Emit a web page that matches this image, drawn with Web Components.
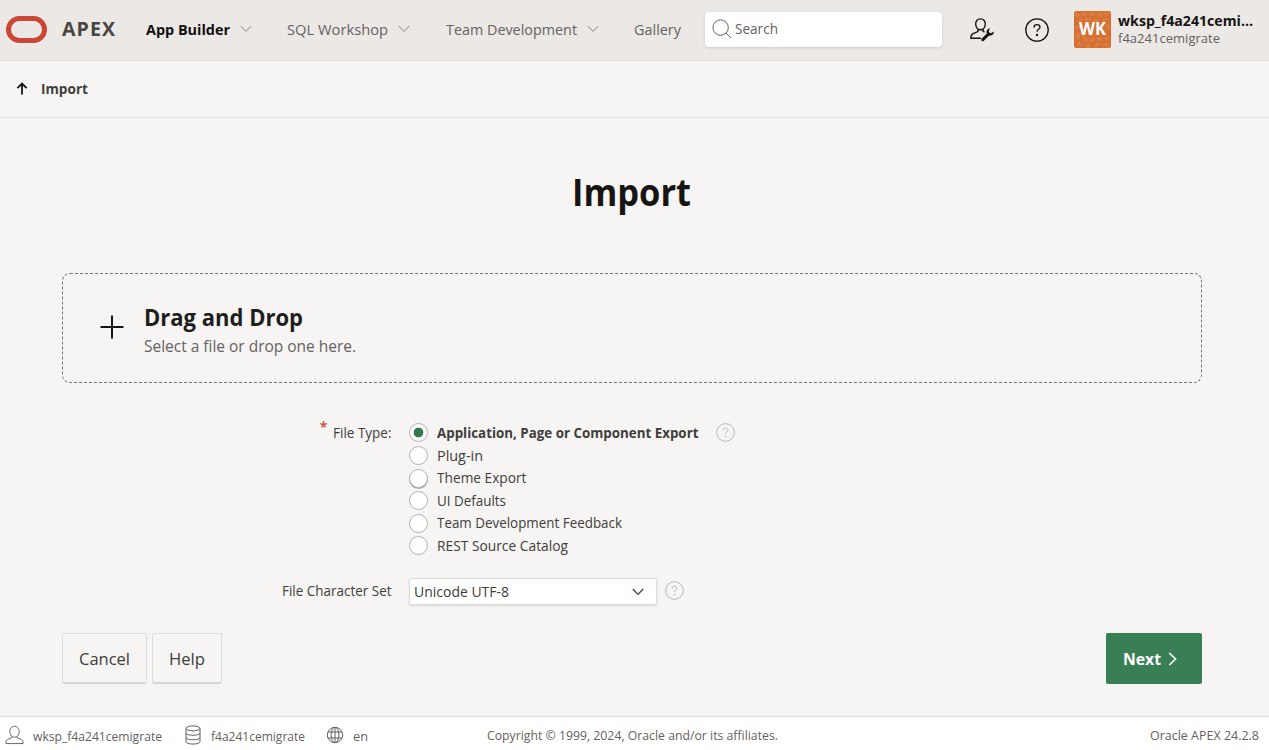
<!DOCTYPE html>
<html lang="en">
<head>
<meta charset="utf-8">
<title>Import</title>
<style>
html,body{margin:0;height:100%;background:#f6f5f3}
body{font-family:"Open Sans","Noto Sans",sans-serif;overflow:hidden}
</style>
</head>
<body>
<apex-page></apex-page>
<script>
function define(name, css, html, ready) {
  customElements.define(name, class extends HTMLElement {
    constructor() {
      super();
      const t = document.createElement('template');
      t.innerHTML = '<style>*{box-sizing:border-box}' + css + '</style>' + html;
      this.attachShadow({mode: 'open'}).appendChild(t.content.cloneNode(true));
    }
    connectedCallback() { if (ready) ready.call(this); }
  });
}

/* Single line label condensed to the width given in its w attribute. */
define('fit-text', ':host{display:block;flex:none;white-space:nowrap}span{display:inline-block;transform-origin:0 50%}',
  '<span><slot></slot></span>', function () {
    const span = this.shadowRoot.querySelector('span');
    const w = +this.getAttribute('w');
    this.style.width = w + 'px';
    const fit = () => {
      span.style.transform = 'none';
      const n = span.getBoundingClientRect().width;
      if (n) span.style.transform = 'scaleX(' + (w / n) + ')';
    };
    requestAnimationFrame(fit);
    document.fonts.ready.then(fit);
    window.addEventListener('load', fit);
  });

const icons = {
  chevron: ['0 0 12 8', '<path d="M.8 1 6 6.4 11.2 1"/>'],
  right: ['0 0 9 14', '<path d="M1.2 1 7.6 7 1.2 13"/>'],
  up: ['0 0 12 13', '<path d="M6 12.5V2M1.4 6.2 6 1.6l4.6 4.6"/>'],
  plus: ['0 0 24 24', '<path d="M12 .5v23M.5 12h23"/>'],
  search: ['0 0 20 20', '<circle cx="8.6" cy="8.6" r="7.7"/><path d="m14 14 5 5"/>'],
  help: ['0 0 24 24', '<circle cx="12" cy="12" r="11.2"/><path d="M9 9.4C9 7.6 10.2 6.6 12 6.6s3 1 3 2.6c0 2-3 2.2-3 4.6"/><circle cx="12" cy="16.9" r=".55" fill="currentColor"/>'],
  user: ['0 0 20 20', '<ellipse cx="10" cy="6.5" rx="5" ry="5.8"/><path d="M7.3 11.6v1.2l-4.8 2Q1 15.500 1 17v2h18v-2q0-1.500-1.500-2.200l-4.800-2v-1.200"/>'],
  admin: ['0 0 24 24', '<path d="M10.500.9C7.300.900 5.500 3.300 5.700 6.300c.2 3 2.300 5.500 4.800 5.500s4.600-2.500 4.800-5.500C15.500 3.300 13.700.900 10.500.9ZM7.900 11v2.600L3.100 15.700Q.8 16.800.8 20.300H11M13.100 11v2.300l1.400.700"/><path d="M12.800 21.600 18 16.600" stroke-width="3" stroke-linecap="round"/><path d="M20.300 10.200c-2.400.2-4.200 2.300-3.700 4.500.4 2 2.400 3.300 4.300 2.900 1.900-.4 3.100-2.100 2.900-4.100l-2.700 1.700-1.900-.7-.4-2Z" fill="currentColor" stroke="none"/>'],
  db: ['0 0 16 20', '<ellipse cx="8" cy="3.400" rx="7" ry="2.500"/><path d="M1 3.400v13.200c0 3.300 14 3.300 14 0V3.400M1 8c0 3 14 3 14 0M1 12.500c0 3 14 3 14 0"/>'],
  globe: ['0 0 18 18', '<circle cx="9" cy="9" r="7.700"/><ellipse cx="9" cy="9" rx="3.900" ry="7.700"/><path d="M9 1.300v15.400M2 6h14M2 12h14"/>']
};
define('ui-icon', ':host{display:block;flex:none}svg{display:block;overflow:visible;fill:none;stroke:currentColor}', '<svg></svg>', function () {
  const [box, body] = icons[this.getAttribute('name')];
  const s = this.shadowRoot.querySelector('svg'), b = box.split(' ');
  s.setAttribute('viewBox', box);
  s.setAttribute('width', this.getAttribute('w') || b[2]);
  s.setAttribute('height', this.getAttribute('h') || b[3]);
  s.setAttribute('stroke-width', this.getAttribute('sw') || 1);
  s.innerHTML = body;
});

define('apex-header', `
:host{display:flex;align-items:center;height:61px;flex:none;background:#ece8e5;border-bottom:1px solid #e0dedc;padding:0 0 2px 6px;font-size:15px;line-height:22px;color:#65625f}
.logo{width:41px;height:27px;border:5px solid #c94734;border-radius:14px;flex:none}
.brand{margin-left:15px;font-size:19px;font-weight:700;letter-spacing:1px;color:#484543;line-height:24px}
.on{font-weight:700;color:#100f0e}
ui-icon{color:#85817e}
.search{width:237px;height:35px;margin-left:24px;margin-top:1px;background:#fff;border-radius:4px;box-shadow:0 1px 3px #0002;display:flex;align-items:center;padding:0 0 1px 7px;gap:3px;font-size:14px;flex:none}
.search ui-icon{color:#65625f}
.dark{color:#161513;margin-top:1px}
.avatar{width:37px;height:37px;border-radius:2px;margin-left:25px;flex:none;overflow:hidden;display:grid;place-items:center;background:#d57033;color:#fff;font-weight:700;font-size:17px}
.avatar>*{grid-area:1/1}
.who{margin-left:7px;margin-top:1px;color:#161513;font-weight:700;font-size:14px;line-height:17px}
.who .sub{font-weight:400;color:#65625f;font-size:13px;line-height:18px}
`, `
<div class="logo"></div><fit-text class="brand" w="54">APEX</fit-text>
<fit-text class="on" w="84" style="margin-left:30px">App Builder</fit-text><ui-icon name="chevron" style="margin-left:10px"></ui-icon>
<fit-text w="101" style="margin-left:35px">SQL Workshop</fit-text><ui-icon name="chevron" style="margin-left:10px"></ui-icon>
<fit-text w="131" style="margin-left:36px">Team Development</fit-text><ui-icon name="chevron" style="margin-left:10px"></ui-icon>
<fit-text w="47" style="margin-left:35px">Gallery</fit-text>
<div class="search"><ui-icon name="search"></ui-icon><fit-text w="43">Search</fit-text></div>
<ui-icon class="dark" name="admin" sw="1.4" style="margin-left:28px"></ui-icon>
<ui-icon class="dark" name="help" sw="1.3" style="margin-left:31px"></ui-icon>
<div class="avatar"><svg width="37" height="37"><g fill="#dd7c3f"><ellipse cx="3" cy="4" rx="3" ry="2" transform="rotate(30 3 4)"/><ellipse cx="10" cy="3" rx="3" ry="2"/><ellipse cx="18" cy="3" rx="3.300" ry="1.800" transform="rotate(-20 18 3)"/><ellipse cx="26" cy="4" rx="3" ry="2"/><ellipse cx="33" cy="3" rx="3" ry="1.800"/><ellipse cx="6" cy="9" rx="3" ry="1.900" transform="rotate(-35 6 9)"/><ellipse cx="14" cy="8" rx="3" ry="1.800"/><ellipse cx="22" cy="9" rx="3" ry="1.800"/><ellipse cx="31" cy="9" rx="3.300" ry="1.800" transform="rotate(-20 31 9)"/><ellipse cx="4" cy="16" rx="3" ry="2"/><ellipse cx="34" cy="16" rx="2.500" ry="3"/><ellipse cx="4" cy="25" rx="2" ry="3.500"/><ellipse cx="11" cy="28" rx="2" ry="3.500" transform="rotate(-30 11 28)"/><ellipse cx="18" cy="29" rx="3" ry="2" transform="rotate(-30 18 29)"/><ellipse cx="26" cy="28" rx="3" ry="2"/><ellipse cx="33" cy="27" rx="3" ry="2" transform="rotate(-30 33 27)"/><ellipse cx="5" cy="33" rx="2" ry="3"/><ellipse cx="14" cy="35" rx="3" ry="1.800"/><ellipse cx="23" cy="34" rx="3" ry="2" transform="rotate(-25 23 34)"/><ellipse cx="32" cy="34" rx="3.300" ry="2"/></g></svg><fit-text w="27">WK</fit-text></div>
<div class="who"><fit-text w="135">wksp_f4a241cemi…</fit-text><fit-text class="sub" w="102">f4a241cemigrate</fit-text></div>
`);

define('apex-breadcrumb', `
:host{display:flex;align-items:center;height:57px;flex:none;border-bottom:1px solid #e2e0de;padding:0 0 1px 16px;font-size:14px;font-weight:700;line-height:20px;color:#403d3b;gap:13px}
ui-icon{color:#161513}`,
`<ui-icon name="up" sw="1.8"></ui-icon><fit-text w="47">Import</fit-text>`);

define('drop-zone', `
:host{display:flex;height:110px;flex:none;padding:29px 37px 0;border:1px dashed #75726f;border-radius:8px}
ui-icon{margin:12px 0 0 -.5px;color:#161513}
.t{margin-left:20px}
.h{font-size:23.500px;line-height:28px;font-weight:700;color:#201e1c}
.s{font-size:16px;line-height:22px;margin-top:4px;color:#65625f}`,
`<ui-icon name="plus" sw="2"></ui-icon><div class="t"><fit-text class="h" w="159">Drag and Drop</fit-text><fit-text class="s" w="212">Select a file or drop one here.</fit-text></div>`);

define('radio-option', `
:host{display:flex;align-items:center;height:22.600px;gap:8.500px;color:#403d3b;font-size:14px;line-height:20px}
i{width:19px;height:19px;border-radius:50%;border:1px solid #b5b2af;background:#fff;flex:none}
:host([checked]) i{background:radial-gradient(circle,#32794f 4.500px,#fff 5.200px)}
:host([checked]){font-weight:700}
:host([shadow]) i{box-shadow:0 1px 0 #aaa7a4}`,
`<i></i><slot></slot>`);

define('import-form', `
:host{display:grid;grid-template-columns:329px 248px auto;column-gap:18px;color:#403d3b;font-size:14px;line-height:20px;flex:none}
.label{display:flex;justify-content:flex-end;height:22px;align-items:center}
.star{color:#c94734;font-size:14px;font-weight:600;line-height:14px;margin:-13px 5px 0 0}
.radios{grid-column:2/4;margin-top:-.4px}
.first{display:flex;align-items:center;gap:17.500px}
ui-icon{color:#aaa7a4}
.row2{margin-top:20.400px;height:27px;display:flex;align-items:center}
.select{background:#fff;border:1px solid #dedbd8;border-radius:2px;box-shadow:0 1px 2px #0002;justify-content:space-between;padding:1px 12px 0 4px}
.select ui-icon{color:#403d3b}
.q{margin-left:-10px}
.q ui-icon{margin-top:-1px}`,
`<div class="label"><span class="star">*</span><fit-text w="58.5">File Type:</fit-text></div>
<div class="radios"><div class="first"><radio-option checked><fit-text w="261.5">Application, Page or Component Export</fit-text></radio-option><ui-icon name="help" w="19" h="19"></ui-icon></div>
<radio-option><fit-text w="46">Plug-in</fit-text></radio-option>
<radio-option shadow><fit-text w="89.5">Theme Export</fit-text></radio-option>
<radio-option><fit-text w="69">UI Defaults</fit-text></radio-option>
<radio-option><fit-text w="185">Team Development Feedback</fit-text></radio-option>
<radio-option><fit-text w="131">REST Source Catalog</fit-text></radio-option></div>
<div class="label row2"><fit-text w="109.5">File Character Set</fit-text></div>
<div class="row2 select"><fit-text w="95">Unicode UTF-8</fit-text><ui-icon name="chevron" sw="1.3"></ui-icon></div>
<div class="row2 q"><ui-icon name="help" w="19" h="19"></ui-icon></div>`);

define('ui-button', `
:host{display:flex;align-items:center;justify-content:center;height:51px;border:1px solid #dedbd8;border-bottom:2px solid #d8d6d3;border-radius:2px;padding:2px 16px 0;font-size:16px;line-height:22px;color:#403d3b;gap:7px}
:host([hot]){justify-content:flex-start;background:#397f55;border-color:#397f55;color:#fff;font-weight:700}`, `<slot></slot>`);

define('apex-footer', `
:host{display:grid;grid-template-columns:1fr auto 1fr;align-items:center;height:34px;flex:none;background:#fff;border-top:1px solid #e2e0de;padding:4px 10px 0 5px;font-size:12.500px;line-height:18px;color:#65625f}
.l{display:flex;align-items:center;margin-top:-1px}.l fit-text{padding-top:3px}
.r{justify-self:end}`,
`<div class="l"><ui-icon name="user" w="19" h="20"></ui-icon><fit-text w="129" style="margin-left:9px">wksp_f4a241cemigrate</fit-text><ui-icon name="db" style="margin-left:23px"></ui-icon><fit-text w="94" style="margin-left:10px">f4a241cemigrate</fit-text><ui-icon name="globe" style="margin-left:21px"></ui-icon><fit-text w="15" style="margin-left:9px">en</fit-text></div>
<fit-text w="291">Copyright © 1999, 2024, Oracle and/or its affiliates.</fit-text><fit-text class="r" w="109">Oracle APEX 24.2.8</fit-text>`);

define('apex-page', `
:host{display:flex;flex-direction:column;height:750px}
main{flex:1;min-height:0;padding:0 67px 0 62px;display:flex;flex-direction:column}
.title{align-self:center;margin:45px 2px 0 0;font-size:38px;line-height:56px;font-weight:700;color:#161513}
drop-zone{margin-top:54px}
import-form{margin-top:39px}
.bar{display:flex;gap:5px;margin-top:28px}
.next{margin-left:auto;width:96px}`,
`<apex-header></apex-header><apex-breadcrumb></apex-breadcrumb>
<main><fit-text class="title" w="119">Import</fit-text><drop-zone></drop-zone><import-form></import-form>
<div class="bar"><ui-button><fit-text w="51">Cancel</fit-text></ui-button><ui-button><fit-text w="36">Help</fit-text></ui-button><ui-button hot class="next"><fit-text w="38">Next</fit-text><ui-icon name="right" sw="1.6"></ui-icon></ui-button></div></main>
<apex-footer></apex-footer>`);
</script>
</body>
</html>
